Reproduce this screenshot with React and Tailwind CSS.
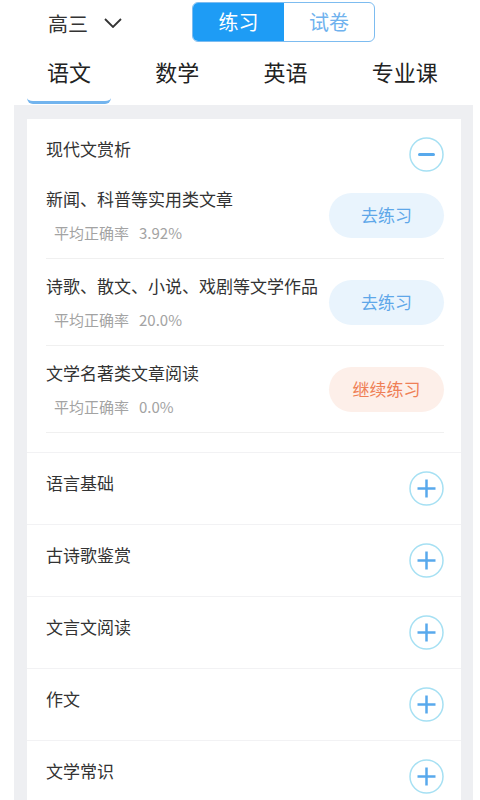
import React, { useState } from "react";

const font = { fontFamily: '"Noto Sans CJK SC", "Noto Sans", sans-serif' };

const sections = [
  {
    name: "现代文赏析",
    open: true,
    items: [
      { title: "新闻、科普等实用类文章", rate: "3.92%", btn: "去练习" },
      { title: "诗歌、散文、小说、戏剧等文学作品", rate: "20.0%", btn: "去练习" },
      { title: "文学名著类文章阅读", rate: "0.0%", btn: "继续练习", warm: true },
    ],
  },
  { name: "语言基础" },
  { name: "古诗歌鉴赏" },
  { name: "文言文阅读" },
  { name: "作文" },
  { name: "文学常识" },
];

const CircleIcon = ({ open }) => (
  <svg width="35" height="35" viewBox="0 0 35 35" className="shrink-0">
    <circle cx="17.5" cy="17.5" r="16.5" fill="none" stroke="#a6e0f3" strokeWidth="1.5" />
    {open ? (
      <line x1="10.5" y1="17.5" x2="24.5" y2="17.5" stroke="#58a9ec" strokeWidth="3" strokeLinecap="round" />
    ) : (
      <>
        <line x1="8.5" y1="17.5" x2="26.5" y2="17.5" stroke="#58a9ec" strokeWidth="2.5" />
        <line x1="17.5" y1="8.5" x2="17.5" y2="26.5" stroke="#58a9ec" strokeWidth="2.5" />
      </>
    )}
  </svg>
);

const App = () => {
  const [tab, setTab] = useState(0);
  const tabs = ["语文", "数学", "英语", "专业课"];

  return (
    <div className="w-[480px] bg-white text-[#333]" style={font}>
      {/* top bar */}
      <div className="flex h-[44px] items-center pl-[48px]">
        <span className="mt-1 text-[20px] leading-[28px] text-[#333]">高三</span>
        <svg width="18" height="10" viewBox="0 0 18 10" className="ml-[16px] mt-[2px]">
          <path d="M1 1 L9 9 L17 1" fill="none" stroke="#333" strokeWidth="1.8" />
        </svg>
        <div className="ml-[70px] flex h-[40px] w-[183px] overflow-hidden rounded-[6px] border border-[#7dbcf0]">
          <div className="flex w-[91px] items-center justify-center bg-[#1e9cf5] text-[20px] text-white">练习</div>
          <div className="flex flex-1 items-center justify-center text-[20px] text-[#6fb2ee]">试卷</div>
        </div>
      </div>

      {/* subject tabs */}
      <div className="flex pl-[47px] pt-[12px]">
        {tabs.map((t, i) => (
          <div key={t} className="w-[109px]">
            <div className="inline-flex flex-col" onClick={() => setTab(i)}>
              <span className="text-[22px] leading-[30px] text-[#222]">{t}</span>
              <div
                className={
                  i === tab
                    ? "mx-[-20px] mt-[12px] h-[6px] rounded-b-[8px] border-b-[3px] border-[#72b4ee]"
                    : "mt-[12px] h-[6px]"
                }
              />
            </div>
          </div>
        ))}
      </div>

      {/* list */}
      <div className="ml-[14px] mt-[1px] w-[459px] bg-[#eeeff2] pl-[13px] pr-[12px] pt-[14px]">
        <div className="bg-white">
          {sections.map((s) => (
            <div key={s.name} className="border-b border-[#f2f2f4] pl-[19px] pr-[17px] pt-[18px] pb-[18px]">
              <div className="flex items-start justify-between">
                <span className="text-[17px] leading-[24px] text-[#333]">{s.name}</span>
                <CircleIcon open={s.open} />
              </div>
              {s.open && (
                <div className="pb-[1px]">
                  {s.items.map((it) => (
                    <div
                      key={it.title}
                      className="flex h-[87px] items-center justify-between border-b border-[#f0f0f0]"
                    >
                      <div className="flex flex-col gap-[12px]">
                        <span className="text-[17px] leading-[24px] text-[#333]">{it.title}</span>
                        <span className="pl-2 text-[15px] leading-[20px] text-[#a3a3a3]">
                          平均正确率<span className="ml-[10px]">{it.rate}</span>
                        </span>
                      </div>
                      <button
                        className={
                          it.warm
                            ? "h-[45px] w-[115px] shrink-0 rounded-full bg-[#fdefe9] text-[17px] text-[#ef7f56]"
                            : "h-[45px] w-[115px] shrink-0 rounded-full bg-[#e9f4fd] text-[17px] text-[#5ea7e9]"
                        }
                      >
                        {it.btn}
                      </button>
                    </div>
                  ))}
                </div>
              )}
            </div>
          ))}
        </div>
      </div>
    </div>
  );
};

export default App;
